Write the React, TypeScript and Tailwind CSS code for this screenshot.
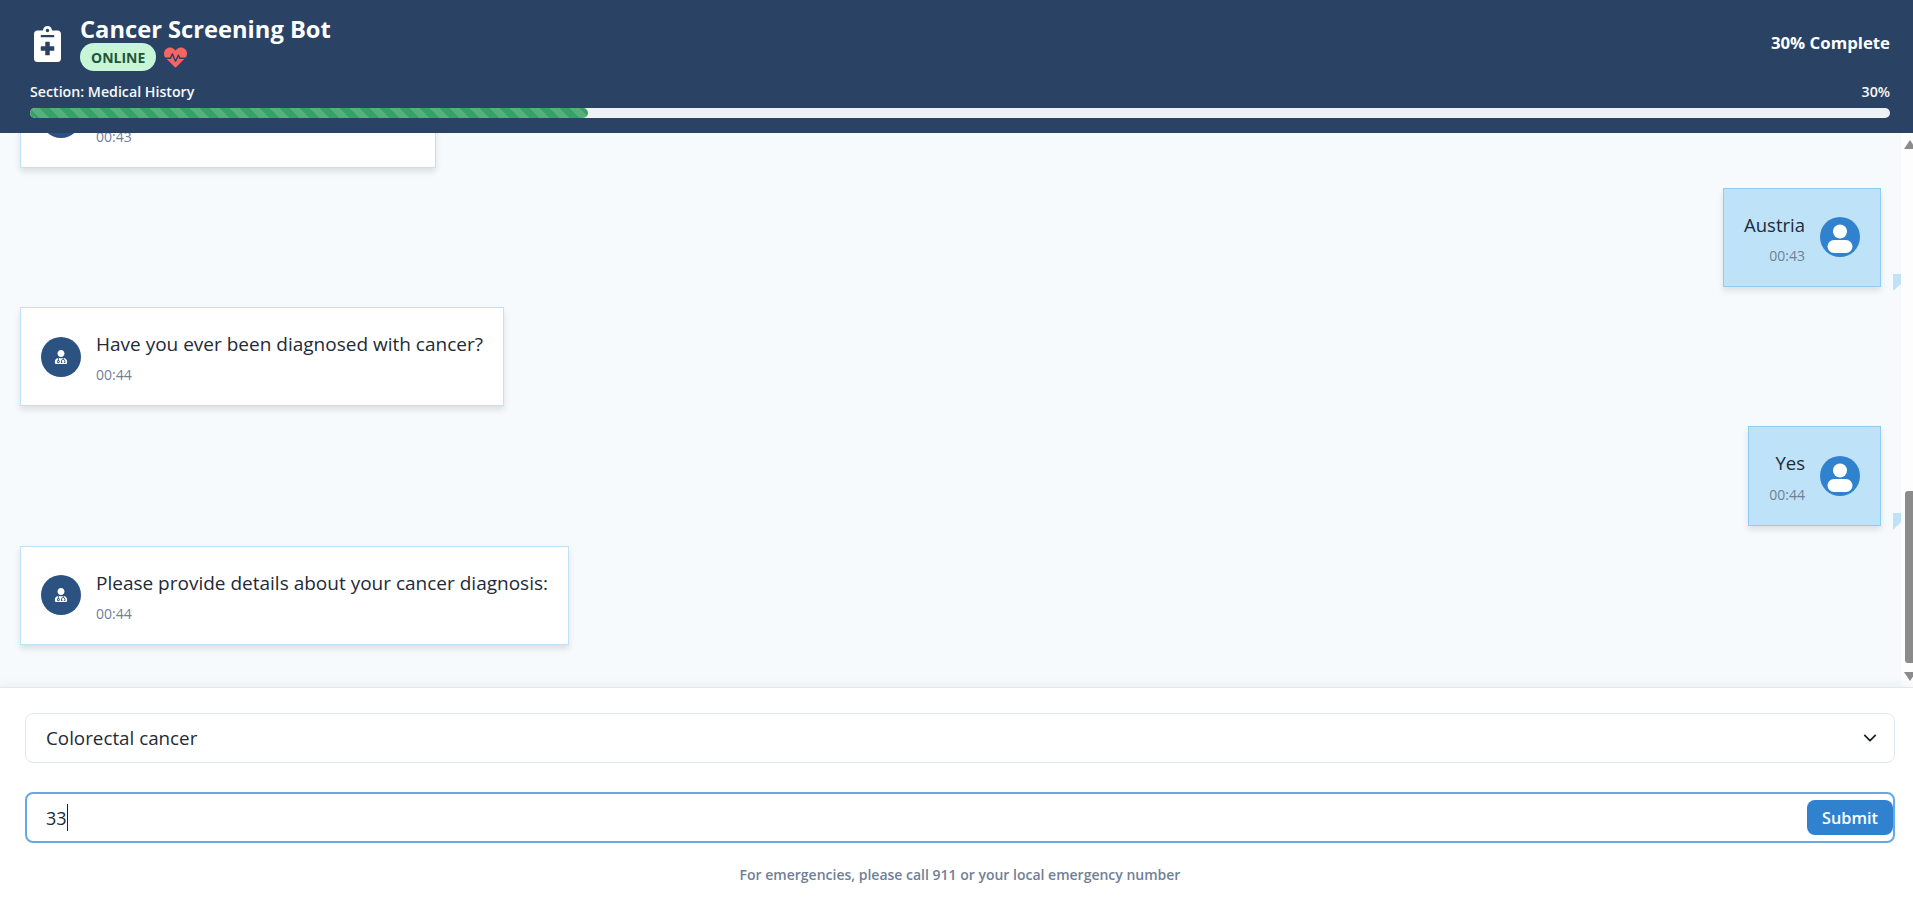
import { FaHeartbeat, FaNotesMedical, FaUserMd } from "react-icons/fa";

const FONT = "font-['Open_Sans','Noto_Sans',sans-serif]";

function UserAvatar() {
  return (
    <div className="w-10 h-10 shrink-0 rounded-full bg-[#3182ce] flex items-center justify-center">
      <svg viewBox="0 0 40 40" className="w-10 h-10" fill="white">
        <circle cx="20" cy="14.5" r="7" />
        <rect x="7.5" y="23" width="25" height="13" rx="6.5" />
      </svg>
    </div>
  );
}

function BotBubble({ text, time, className = "" }: { text: string; time: string; className?: string }) {
  return (
    <div className={`self-start shrink-0 flex items-center gap-[15px] bg-white border border-[#bee3f8] p-5 shadow-[0_4px_6px_rgba(0,0,0,0.1)] ${className}`}>
      <div className="w-10 h-10 shrink-0 rounded-full bg-[#2c5282] flex items-center justify-center">
        <FaUserMd className="text-white text-sm" />
      </div>
      <div>
        <p className="pt-[1px] text-[19px] leading-[30px] text-[#232a37] whitespace-nowrap">{text}</p>
        <p className="mt-[5.33px] text-[14px] leading-[21px] text-[#718096]">{time}</p>
      </div>
    </div>
  );
}

function UserBubble({ text, time }: { text: string; time: string }) {
  return (
    <div className="relative self-end shrink-0 flex items-center gap-[15px] bg-[#bee3f8] border border-[#90cdf4] p-5 shadow-[0_4px_6px_rgba(0,0,0,0.1)]">
      <div className="text-right">
        <p className="pt-[1px] text-[18.5px] leading-[30px] text-[#232a37]">{text}</p>
        <p className="mt-[5.33px] text-[14px] leading-[21px] text-[#718096]">{time}</p>
      </div>
      <UserAvatar />
      {/* tail, cut off by the chat panel */}
      <div className="absolute right-[-21px] bottom-[-5px] w-2 h-[17px] bg-[#bee3f8] [clip-path:polygon(0_0,100%_0,100%_57%,0_100%)]" />
    </div>
  );
}

export default function App() {
  return (
    <div className={`h-screen w-full flex flex-col overflow-hidden bg-white ${FONT}`}>
      <header className="h-[133px] shrink-0 bg-[#2a4365] text-white pl-[30px] pr-[23px] pt-[15px]">
        <div className="flex justify-between items-center">
          <div className="flex items-center gap-[19px]">
            <FaNotesMedical className="w-[27px] h-9 ml-[4px] mt-[2px]" />
            <div>
              <h1 className="text-[23.7px] leading-[28px] font-bold">Cancer Screening Bot</h1>
              <div className="flex items-center gap-2">
                <span className="h-7 px-[11px] flex items-center rounded-full bg-[#c6f6d5] text-[#22543d] text-[14px] font-bold">ONLINE</span>
                <FaHeartbeat className="text-[#f56565] text-[23px]" />
              </div>
            </div>
          </div>
          <span className="text-[16.8px] font-bold">30% Complete</span>
        </div>
        <div className="flex justify-between text-[14.2px] font-semibold mt-[10px] leading-[21px] text-[#f7fafc]">
          <span>Section: Medical History</span>
          <span>30%</span>
        </div>
        <div className="h-[10px] mt-[6px] rounded-full bg-[#edf2f7] overflow-hidden">
          <div className="h-full w-[30%] rounded-full bg-[#38a169] bg-[linear-gradient(45deg,rgba(255,255,255,0.15)_25%,transparent_25%,transparent_50%,rgba(255,255,255,0.15)_50%,rgba(255,255,255,0.15)_75%,transparent_75%,transparent)] bg-[length:20px_20px]" />
        </div>
      </header>

      <main className="flex-1 min-h-0 flex">
        <div className="flex-1 min-w-0 overflow-hidden bg-[#f7fafc] flex flex-col justify-end gap-5 px-5 pb-[42px]">
          <BotBubble text="What is your country of residence?" time="00:43" className="w-[416px]" />
          <UserBubble text="Austria" time="00:43" />
          <BotBubble text="Have you ever been diagnosed with cancer?" time="00:44" />
          <UserBubble text="Yes" time="00:44" />
          <BotBubble text="Please provide details about your cancer diagnosis:" time="00:44" />
        </div>
        {/* scrollbar, its right end is cut off by the window */}
        <div className="w-3 shrink-0 bg-[#fdfdfd] flex flex-col items-end pt-[7px] pb-[6px]">
          <div className="w-0 h-0 border-x-[6px] border-x-transparent border-b-[9px] border-b-[#8b8b8b] mr-[-3px]" />
          <div className="flex-1" />
          <div className="w-2 h-[172px] rounded-l-[3px] bg-[#8b8b8b] mb-[9px]" />
          <div className="w-0 h-0 border-x-[6px] border-x-transparent border-t-[9px] border-t-[#8b8b8b] mr-[-3px]" />
        </div>
      </main>

      <footer className="h-[215px] shrink-0 bg-white border-t border-[#e2e8f0] pl-[25px] pr-[18px] pt-[25px] shadow-[0_-2px_10px_rgba(0,0,0,0.05)] relative">
        <div className="h-[50px] flex items-center justify-between rounded-lg border border-[#e2e8f0] pl-5 pr-[17px] text-[18.8px] text-[#232a37]">
          <span>Colorectal cancer</span>
          <svg viewBox="0 0 16 16" className="w-[14px] h-[14px]" fill="none" stroke="#1a202c" strokeWidth="2" strokeLinecap="round" strokeLinejoin="round">
            <path d="m2 5 6 6 6-6" />
          </svg>
        </div>
        <div className="h-[51px] mt-[29px] flex items-center justify-between rounded-lg border-2 border-[#63a9e6] pl-[19px] text-[18px] text-[#232a37]">
          <div className="flex items-center">
            <span className="pt-[2px]">33</span>
            <span className="w-px h-[27px] bg-[#1a202c]" />
          </div>
          <button className="h-[35px] w-[86px] pt-[2px] rounded-lg bg-[#3182ce] text-white text-[16.3px] font-semibold">Submit</button>
        </div>
        <p className="mt-[21px] text-center text-[14px] font-semibold text-[#718096]">
          For emergencies, please call 911 or your local emergency number
        </p>
      </footer>
    </div>
  );
}
